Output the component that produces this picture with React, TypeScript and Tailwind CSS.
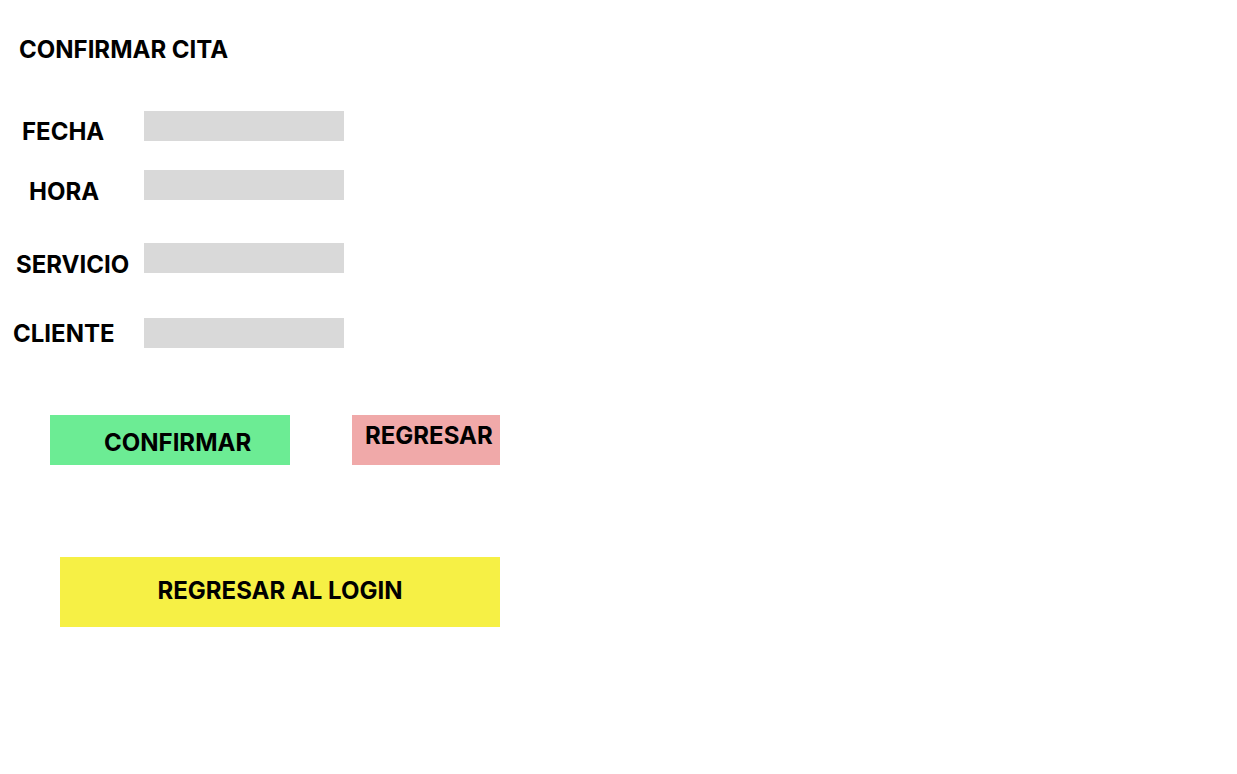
import React from 'react'

const rows = [
  { label: 'FECHA', mt: 'mt-[47px]', pl: 'pl-[22px]', pt: 'pt-[6px]' },
  { label: 'HORA', mt: 'mt-[29px]', pl: 'pl-[29px]', pt: 'pt-[7px]' },
  { label: 'SERVICIO', mt: 'mt-[43px]', pl: 'pl-[16px]', pt: 'pt-[7px]' },
  { label: 'CLIENTE', mt: 'mt-[45px]', pl: 'pl-[13px]', pt: 'pt-[1px]' },
]

export default function App() {
  return (
    <div className="w-[1237px] h-[774px] bg-white text-black font-['Inter',sans-serif] font-bold text-[24px] leading-[29px] flex flex-col">
      <h1 className="pt-[35px] pl-[19px] text-[24px] leading-[29px] font-bold">CONFIRMAR CITA</h1>

      {rows.map((r) => (
        <div key={r.label} className={`${r.mt} flex items-start h-[30px]`}>
          <div className={`w-[144px] ${r.pl} ${r.pt} whitespace-nowrap`}>{r.label}</div>
          <div className="w-[200px] h-[30px] bg-[#d9d9d9]" />
        </div>
      ))}

      <div className="mt-[67px] flex items-start">
        <button className="ml-[50px] w-[240px] h-[50px] bg-[#6cec94] flex items-start pl-[54px] pt-[13px] whitespace-nowrap">
          CONFIRMAR
        </button>
        <button className="ml-[62px] w-[148px] h-[50px] bg-[#f0a9a9] flex items-start pl-[13px] pt-[6px] whitespace-nowrap">
          REGRESAR
        </button>
      </div>

      <button className="mt-[92px] ml-[60px] w-[440px] h-[70px] bg-[#f6f045] flex justify-center items-start pt-[19px] whitespace-nowrap">
        REGRESAR AL LOGIN
      </button>
    </div>
  )
}
